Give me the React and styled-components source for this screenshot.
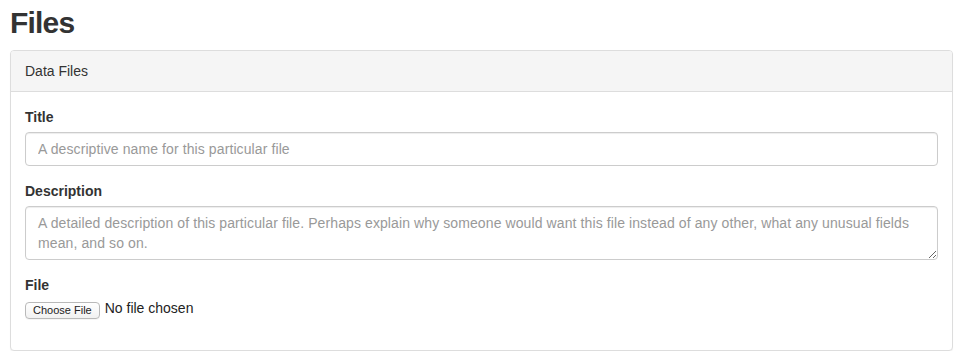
import React from "react";
import styled, {createGlobalStyle} from "styled-components";

const GlobalStyle = createGlobalStyle`
html, body {
margin: 0;
padding: 0;
background: #fff;
}
body {
font-family: "Liberation Sans", Arial, Helvetica, sans-serif;
font-size: 14px;
line-height: 20px;
color: #333;
}
* {
box-sizing: border-box;
}
`;

const Page = styled.div`
padding: 0 9px 0 10px;
`;

const Heading = styled.h1`
margin: 0 0 10px 0;
padding-top: 5px;
font-size: 30px;
line-height: 35px;
font-weight: bold;
letter-spacing: -0.8px;
color: #333;
`;

const Panel = styled.div`
background: #fff;
border: 1px solid #ddd;
border-radius: 4px;
box-shadow: 0 1px 1px rgba(0, 0, 0, 0.05);
`;

const PanelHeading = styled.div`
padding: 10px 14px;
background: #f5f5f5;
border-bottom: 1px solid #ddd;
border-radius: 3px 3px 0 0;
color: #333;
`;

const PanelBody = styled.div`
padding: 15px 14px;
`;

const FormGroup = styled.div`
margin-bottom: 15px;
`;

const Label = styled.label`
display: block;
margin-bottom: 5px;
font-weight: bold;
`;

const Input = styled.input`
display: block;
width: 100%;
height: 34px;
padding: 6px 12px;
font-family: inherit;
font-size: 14px;
line-height: 20px;
letter-spacing: 0.1px;
color: #555;
background: #fff;
border: 1px solid #ccc;
border-radius: 4px;
box-shadow: inset 0 1px 1px rgba(0, 0, 0, 0.075);
outline: none;
&::placeholder {
color: #999;
}
`;

const TextArea = styled.textarea`
display: block;
width: 100%;
height: 54px;
padding: 6px 12px;
font-family: inherit;
font-size: 14px;
line-height: 20px;
letter-spacing: 0.1px;
color: #555;
background: #fff;
border: 1px solid #ccc;
border-radius: 4px;
box-shadow: inset 0 1px 1px rgba(0, 0, 0, 0.075);
outline: none;
resize: vertical;
&::placeholder {
color: #999;
}
`;

const FileRow = styled.div`
display: flex;
align-items: center;
gap: 5px;
height: 20px;
margin-top: 5px;
`;

const ChooseButton = styled.button`
height: 17px;
padding: 0 7px;
font-family: "Liberation Sans", Arial, sans-serif;
font-size: 11px;
line-height: 15px;
color: #222;
background: linear-gradient(#fff, #f1f1f1);
border: 1px solid #b9b9b9;
border-radius: 4px;
box-shadow: 0 1px 0 rgba(0, 0, 0, 0.04);
`;

const FileName = styled.span`
font-size: 14px;
line-height: 17px;
color: #222;
margin-top: -4px;
`;

export default function App() {
    return <Page>
        <GlobalStyle/>
        <Heading>Files</Heading>
        <Panel>
            <PanelHeading>Data Files</PanelHeading>
            <PanelBody>
                <FormGroup>
                    <Label htmlFor="title">Title</Label>
                    <Input id="title" placeholder="A descriptive name for this particular file"/>
                </FormGroup>
                <FormGroup>
                    <Label htmlFor="description">Description</Label>
                    <TextArea id="description" rows={2}
                              placeholder="A detailed description of this particular file. Perhaps explain why someone would want this file instead of any other, what any unusual fields mean, and so on."/>
                </FormGroup>
                <FormGroup>
                    <Label>File</Label>
                    <FileRow>
                        <ChooseButton type="button">Choose File</ChooseButton>
                        <FileName>No file chosen</FileName>
                    </FileRow>
                </FormGroup>
            </PanelBody>
        </Panel>
    </Page>;
}
